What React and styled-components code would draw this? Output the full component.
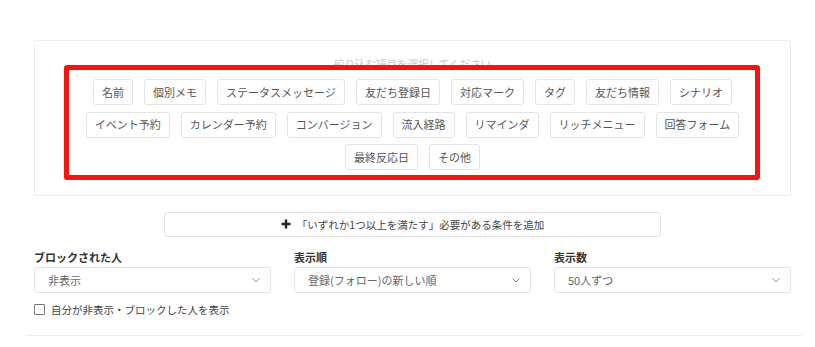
import React from 'react';
import styled, { createGlobalStyle } from 'styled-components';

const GlobalStyle = createGlobalStyle`
    body {
        margin: 0;
        background: #fff;
        font-family: "Noto Sans CJK JP", "Noto Sans", "Liberation Sans", sans-serif;
    }
`

const Page = styled.div`
    width: 815px;
    height: 347px;
    padding-top: 40px;
    box-sizing: border-box;
    overflow: hidden;
`

const Content = styled.div`
    margin: 0 24px 0 34px;
`

const Panel = styled.div`
    position: relative;
    height: 156px;
    box-sizing: border-box;
    border: 1px solid #ececec;
    border-radius: 3px;
    padding-top: 16px;
`

const Hint = styled.div`
    text-align: center;
    font-size: 10.5px;
    line-height: 14px;
    color: #c9c9c9;
    margin-bottom: 8px;
`

// annotation frame drawn over the tag area
const Highlight = styled.div`
    position: absolute;
    left: 29px;
    right: 30px;
    top: 24px;
    height: 115px;
    border: 5px solid #ff1010;
    border-radius: 3px;
    box-sizing: border-box;
    pointer-events: none;
`

const Tags = styled.div`
    display: flex;
    flex-wrap: wrap;
    justify-content: center;
    gap: 6.5px 11px;
    max-width: 690px;
    margin: 0 auto;
`

const Tag = styled.button`
    height: 26px;
    padding: 0 8px;
    border: 1px solid #e4e4e4;
    border-radius: 3px;
    background: #fff;
    font-family: inherit;
    font-size: 11px;
    color: #555;
    line-height: 1;
    white-space: nowrap;
`

const AddButton = styled.button`
    display: flex;
    align-items: center;
    justify-content: center;
    gap: 6px;
    width: 497px;
    height: 25px;
    margin: 16px auto 0;
    border: 1px solid #e4e4e4;
    border-radius: 3px;
    background: #fff;
    font-family: inherit;
    font-size: 10.5px;
    color: #444;
    padding: 0;

    svg { margin-top: -1px; }
`

const Filters = styled.div`
    display: grid;
    grid-template-columns: repeat(3, 1fr);
    column-gap: 23px;
    margin-top: 13px;
`

const Label = styled.div`
    font-size: 11px;
    font-weight: bold;
    line-height: 14px;
    color: #333;
    margin-bottom: 3px;
`

const Select = styled.div`
    display: flex;
    align-items: center;
    justify-content: space-between;
    height: 26px;
    box-sizing: border-box;
    padding: 0 10px 0 13px;
    border: 1px solid #e4e4e4;
    border-radius: 3px;
    font-size: 11px;
    color: #666;
`

const CheckRow = styled.label`
    display: flex;
    align-items: center;
    gap: 6px;
    margin-top: 9px;
    font-size: 10.5px;
    color: #444;
`

const Box = styled.span`
    width: 9px;
    height: 9px;
    border: 1px solid #777;
    border-radius: 1px;
`

const Rule = styled.div`
    margin: 18px 13px 0 26px;
    border-top: 1px solid #eeeeee;
`

const tags = [
    '名前', '個別メモ', 'ステータスメッセージ', '友だち登録日', '対応マーク', 'タグ', '友だち情報', 'シナリオ',
    'イベント予約', 'カレンダー予約', 'コンバージョン', '流入経路', 'リマインダ', 'リッチメニュー', '回答フォーム',
    '最終反応日', 'その他',
]

const filters = [
    { label: 'ブロックされた人', value: '非表示' },
    { label: '表示順', value: '登録(フォロー)の新しい順' },
    { label: '表示数', value: '50人ずつ' },
]

const Chevron = () => (
    <svg width="8" height="5" viewBox="0 0 8 5">
        <path d="M0.5 0.5 L4 4 L7.5 0.5" fill="none" stroke="#888" strokeWidth="1" />
    </svg>
)

const Plus = () => (
    <svg width="10" height="10" viewBox="0 0 10 10">
        <path d="M5 0.5 V9.5 M0.5 5 H9.5" stroke="#222" strokeWidth="2.4" />
    </svg>
)

export default function App() {
    return (
        <Page>
            <GlobalStyle />
            <Content>
                <Panel>
                    <Hint>絞り込む項目を選択してください</Hint>
                    <Tags>
                        {tags.map(t => <Tag key={t}>{t}</Tag>)}
                    </Tags>
                    <Highlight />
                </Panel>

                <AddButton><Plus />「いずれか1つ以上を満たす」必要がある条件を追加</AddButton>

                <Filters>
                    {filters.map(f => (
                        <div key={f.label}>
                            <Label>{f.label}</Label>
                            <Select>{f.value}<Chevron /></Select>
                        </div>
                    ))}
                </Filters>

                <CheckRow><Box />自分が非表示・ブロックした人を表示</CheckRow>
            </Content>
            <Rule />
        </Page>
    )
}
